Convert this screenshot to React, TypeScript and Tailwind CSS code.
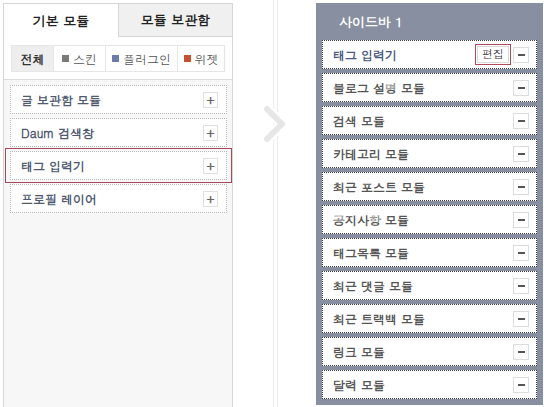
const FONT = "font-['Dotum','Liberation_Sans','Noto_Sans_CJK_KR',sans-serif]";

const LEFT_ITEMS = ["글 보관함 모듈", "Daum 검색창", "태그 입력기", "프로필 레이어"];

const SIDEBAR_ITEMS = [
  "태그 입력기",
  "블로그 설명 모듈",
  "검색 모듈",
  "카테고리 모듈",
  "최근 포스트 모듈",
  "공지사항 모듈",
  "태그목록 모듈",
  "최근 댓글 모듈",
  "최근 트랙백 모듈",
  "링크 모듈",
  "달력 모듈",
];

function PlusButton() {
  return (
    <span className="w-[15px] h-[16px] border border-[#e0e0e0] bg-white flex items-center justify-center text-[#666] text-[13px] font-bold leading-none">
      +
    </span>
  );
}

function MinusButton() {
  return (
    <span className="w-[16px] h-[16px] border border-[#dcdcdc] bg-white flex items-center justify-center">
      <span className="block w-[7px] h-[2px] bg-[#555]" />
    </span>
  );
}

function LeftItem({ label }: { label: string }) {
  return (
    <div className="ml-[6px] w-[217px] h-[29px] border border-dotted border-[#b8b8b8] bg-white flex items-center justify-between pl-[10px] pr-[8px]">
      <span className="text-[12px] font-bold text-[#4f5a70]">{label}</span>
      <PlusButton />
    </div>
  );
}

function Chevron() {
  return (
    <svg className="absolute left-[30px] top-[105px]" width="24" height="38" viewBox="0 0 24 38">
      <polyline points="4,4 19,19 4,34" fill="none" stroke="#ffffff" strokeWidth="10" strokeLinecap="round" strokeLinejoin="round" />
      <polyline points="4,4 19,19 4,34" fill="none" stroke="#e6e6e6" strokeWidth="6" strokeLinecap="round" strokeLinejoin="round" />
    </svg>
  );
}

export default function App() {
  return (
    <div className={`w-[544px] h-[407px] overflow-hidden bg-white flex ${FONT}`}>
      {/* module picker */}
      <div className="ml-[3px] mt-[3px] w-[230px] h-[410px] border border-[#d6d6d6] bg-[#f7f7f7] flex flex-col">
        <div className="flex h-[33px]">
          <div className="w-[114px] bg-white flex items-center justify-center text-[13px] font-bold text-[#222]">
            기본 모듈
          </div>
          <div className="flex-1 bg-[#f0f0f0] border-l border-b border-[#d6d6d6] flex items-center justify-center text-[13px] font-bold text-[#222]">
            모듈 보관함
          </div>
        </div>
        <div className="bg-white pt-[8px] pb-[7px] border-b border-[#dcdcdc]">
          <div className="mx-[7px] h-[27px] flex border border-[#e6e6e6] text-[12px] text-[#555]">
            <div className="w-[41px] bg-[#eeeeee] flex items-center justify-center font-bold text-[#333]">전체</div>
            <div className="w-[52px] border-l border-[#e6e6e6] flex items-center justify-center gap-[4px]">
              <span className="w-[7px] h-[7px] bg-[#7a7a7a]" />
              스킨
            </div>
            <div className="w-[72px] border-l border-[#e6e6e6] flex items-center justify-center gap-[4px]">
              <span className="w-[7px] h-[7px] bg-[#6b7aa8]" />
              플러그인
            </div>
            <div className="flex-1 border-l border-[#e6e6e6] flex items-center justify-center gap-[4px]">
              <span className="w-[7px] h-[7px] bg-[#c5512e]" />
              위젯
            </div>
          </div>
        </div>
        <div className="pt-[5px] flex flex-col gap-[4px]">
          {LEFT_ITEMS.map((label) =>
            label === "태그 입력기" ? (
              <div key={label} className="ml-[1px] -my-[3px] w-[227px] border border-[#a5495a] px-[4px] py-[2px]">
                <div className="w-[217px] h-[29px] border border-dotted border-[#b8b8b8] bg-white flex items-center justify-between pl-[10px] pr-[8px]">
                  <span className="text-[12px] font-bold text-[#4f5a70]">{label}</span>
                  <PlusButton />
                </div>
              </div>
            ) : (
              <LeftItem key={label} label={label} />
            )
          )}
        </div>
      </div>

      {/* gutter */}
      <div className="relative w-[83px] h-full">
        <div className="ml-[40px] w-[5px] h-full border-x border-[#efefef]" />
        <Chevron />
      </div>

      {/* sidebar */}
      <div className="mt-[3px] w-[227px] h-[402px] bg-[#878fa0] px-[6px]">
        <div className="h-[37px] flex items-center pl-[17px] text-[13px] font-bold text-white">사이드바 1</div>
        <div className="flex flex-col gap-[4px]">
          {SIDEBAR_ITEMS.map((label, i) => (
            <div
              key={label}
              className="h-[29px] border border-dotted border-[#3a3a3a] bg-white flex items-center justify-between pl-[10px] pr-[7px]"
            >
              <span className={`text-[12px] font-bold ${i === 0 ? "text-[#4b5b80]" : "text-[#555]"}`}>{label}</span>
              <div className="flex items-center gap-[2px]">
                {i === 0 && (
                  <span className="h-[21px] w-[36px] border border-[#b04a5a] flex items-center justify-center">
                    <span className="h-[17px] w-[32px] border border-[#d8d8d8] flex items-center justify-center text-[11px] text-[#333]">
                      편집
                    </span>
                  </span>
                )}
                <MinusButton />
              </div>
            </div>
          ))}
        </div>
      </div>
    </div>
  );
}
